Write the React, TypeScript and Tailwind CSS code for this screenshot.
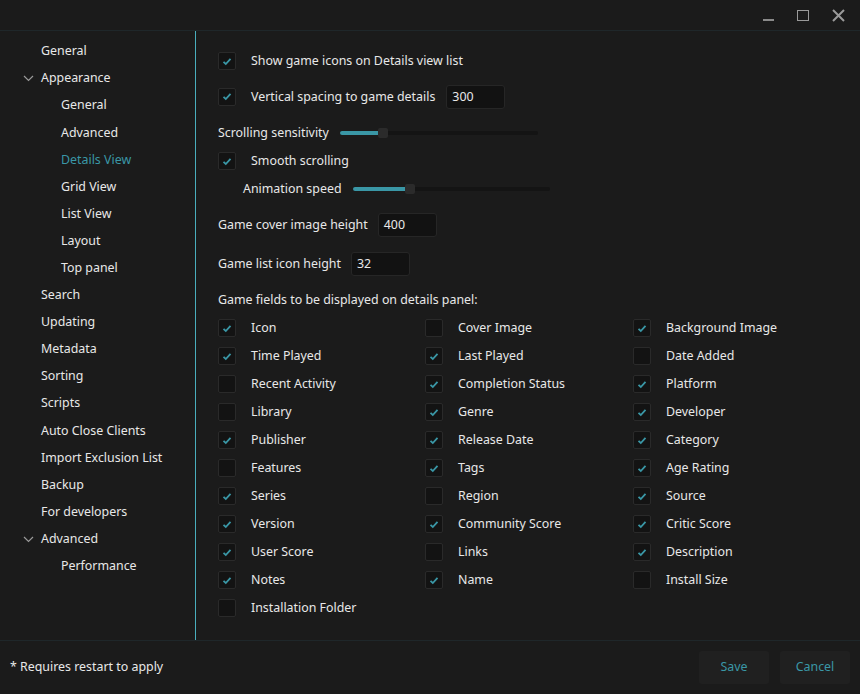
import { useState } from "react";

const font = { fontFamily: '"Noto Sans", "Open Sans", sans-serif' };

type NavItem = { label: string; level: number; chevron?: boolean; active?: boolean };

const navItems: NavItem[] = [
  { label: "General", level: 0 },
  { label: "Appearance", level: 0, chevron: true },
  { label: "General", level: 1 },
  { label: "Advanced", level: 1 },
  { label: "Details View", level: 1, active: true },
  { label: "Grid View", level: 1 },
  { label: "List View", level: 1 },
  { label: "Layout", level: 1 },
  { label: "Top panel", level: 1 },
  { label: "Search", level: 0 },
  { label: "Updating", level: 0 },
  { label: "Metadata", level: 0 },
  { label: "Sorting", level: 0 },
  { label: "Scripts", level: 0 },
  { label: "Auto Close Clients", level: 0 },
  { label: "Import Exclusion List", level: 0 },
  { label: "Backup", level: 0 },
  { label: "For developers", level: 0 },
  { label: "Advanced", level: 0, chevron: true },
  { label: "Performance", level: 1 },
];

const fields: [string, boolean][] = [
  ["Icon", true], ["Cover Image", false], ["Background Image", true],
  ["Time Played", true], ["Last Played", true], ["Date Added", false],
  ["Recent Activity", false], ["Completion Status", true], ["Platform", true],
  ["Library", false], ["Genre", true], ["Developer", true],
  ["Publisher", true], ["Release Date", true], ["Category", true],
  ["Features", false], ["Tags", true], ["Age Rating", true],
  ["Series", true], ["Region", false], ["Source", true],
  ["Version", true], ["Community Score", true], ["Critic Score", true],
  ["User Score", true], ["Links", false], ["Description", true],
  ["Notes", true], ["Name", true], ["Install Size", false],
  ["Installation Folder", false],
];

function Check({ checked }: { checked: boolean }) {
  return (
    <div className="w-[18px] h-[18px] shrink-0 bg-[#131313] border border-[#2a2a2a] rounded-[2px] flex items-center justify-center">
      {checked && (
        <svg width="10" height="9" viewBox="0 0 10 9">
          <path d="M1.5 4.8 L3.8 7 L8.5 1.8" fill="none" stroke="#3a97a6" strokeWidth="1.8" />
        </svg>
      )}
    </div>
  );
}

function CheckRow({ label, checked }: { label: string; checked: boolean }) {
  return (
    <div className="flex items-center gap-[15px] h-[28px]">
      <Check checked={checked} />
      <span>{label}</span>
    </div>
  );
}

function NumberBox({ value, width }: { value: string; width: string }) {
  return (
    <div className={`${width} h-[24px] bg-[#121212] border border-[#262626] rounded-[3px] flex items-center pl-[5px]`}>
      {value}
    </div>
  );
}

function Slider({ pct, width }: { pct: number; width: string }) {
  return (
    <div className={`relative ${width} h-[10px] flex items-center`}>
      <div className="w-full h-[4px] bg-[#141414] rounded-full" />
      <div className="absolute left-0 h-[4px] bg-[#3a97a6] rounded-full" style={{ width: `${pct}%` }} />
      <div
        className="absolute w-[10px] h-[10px] bg-[#2b2b2b] rounded-[2px] -translate-x-1/2"
        style={{ left: `${pct}%` }}
      />
    </div>
  );
}

export default function App() {
  const [selected] = useState("Details View");

  return (
    <div className="w-[860px] h-[694px] bg-[#1b1b1b] text-[#e8e8e8] text-[12.4px] flex flex-col overflow-hidden" style={font}>
      {/* title bar */}
      <div className="h-[31px] shrink-0 border-b border-[#1f272a] flex items-center justify-end gap-[23px] pr-[15px]">
        <div className="w-[11px] h-[2px] bg-[#8a8a8a] mt-[10px]" />
        <div className="w-[12px] h-[11px] border-[1.5px] border-[#9a9a9a]" />
        <svg width="13" height="13" viewBox="0 0 13 13">
          <path d="M1 1 L12 12 M12 1 L1 12" stroke="#9a9a9a" strokeWidth="2" />
        </svg>
      </div>

      <div className="flex flex-1 min-h-0">
        {/* sidebar */}
        <div className="w-[196px] shrink-0 pt-[7px] border-r border-[#49aebd]">
          {navItems.map((item, i) => (
            <div
              key={i}
              className={`h-[27.1px] flex items-center ${item.level === 0 ? "pl-[41px]" : "pl-[61px]"} relative`}
            >
              {item.chevron && (
                <svg className="absolute left-[23px]" width="11" height="7" viewBox="0 0 11 7">
                  <path d="M1 1 L5.5 5.5 L10 1" fill="none" stroke="#9a9a9a" strokeWidth="1.2" />
                </svg>
              )}
              <span className={item.active && item.label === selected ? "text-[#3a97a6]" : ""}>{item.label}</span>
            </div>
          ))}
        </div>

        {/* content */}
        <div className="flex-1 pl-[22px] pt-[16px]">
          <CheckRow label="Show game icons on Details view list" checked />
          <div className="flex items-center h-[28px] mt-[8px]">
            <div className="flex items-center gap-[15px]">
              <Check checked />
              <span>Vertical spacing to game details</span>
            </div>
            <div className="ml-[11px]">
              <NumberBox value="300" width="w-[59px]" />
            </div>
          </div>
          <div className="flex items-center h-[28px] mt-[8px]">
            <span>Scrolling sensitivity</span>
            <div className="ml-[11px]">
              <Slider pct={22} width="w-[198px]" />
            </div>
          </div>
          <CheckRow label="Smooth scrolling" checked />
          <div className="flex items-center h-[28px] pl-[25px]">
            <span>Animation speed</span>
            <div className="ml-[11px]">
              <Slider pct={29} width="w-[197px]" />
            </div>
          </div>
          <div className="flex items-center h-[28px] mt-[8px]">
            <span>Game cover image height</span>
            <div className="ml-[10px]">
              <NumberBox value="400" width="w-[59px]" />
            </div>
          </div>
          <div className="flex items-center h-[28px] mt-[11px]">
            <span>Game list icon height</span>
            <div className="ml-[10px]">
              <NumberBox value="32" width="w-[59px]" />
            </div>
          </div>
          <div className="h-[28px] flex items-center mt-[8px]">Game fields to be displayed on details panel:</div>
          <div className="grid grid-cols-[207px_208px_1fr]">
            {fields.map(([label, checked]) => (
              <CheckRow key={label} label={label} checked={checked} />
            ))}
          </div>
        </div>
      </div>

      {/* footer */}
      <div className="h-[54px] shrink-0 border-t border-[#1f272a] flex items-center justify-between pl-[10px] pr-[10px]">
        <span>* Requires restart to apply</span>
        <div className="flex gap-[11px]">
          <button className="w-[70px] h-[33px] bg-[#202020] rounded-[3px] text-[#3a97a6]">Save</button>
          <button className="w-[70px] h-[33px] bg-[#202020] rounded-[3px] text-[#3a97a6]">Cancel</button>
        </div>
      </div>
    </div>
  );
}
